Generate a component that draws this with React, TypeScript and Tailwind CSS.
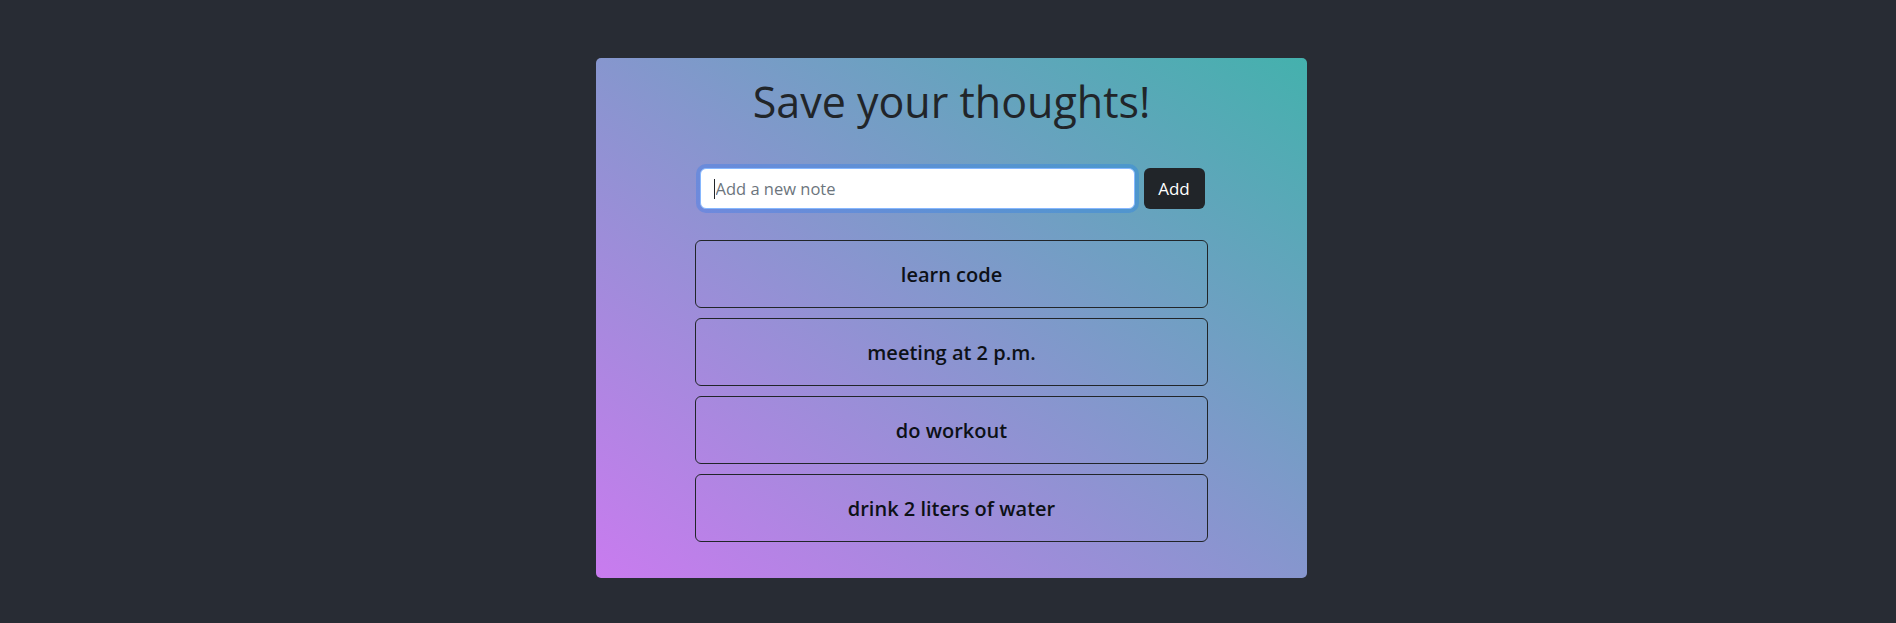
import React from "react";

const notes = ["learn code", "meeting at 2 p.m.", "do workout", "drink 2 liters of water"];

export default function App() {
  return (
    <div
      className="min-h-[623px] bg-[#282c34] pt-[58px] pl-[7px] flex justify-center items-start"
      style={{ fontFamily: '"Open Sans", "Noto Sans", sans-serif' }}
    >
      <div className="w-[711px] h-[520px] rounded-[5px] bg-[linear-gradient(to_top_right,#c97bef,#44b1ad)] flex flex-col items-center">
        <h1 className="mt-[17px] text-[43px] leading-[53px] font-medium text-[#212529]">
          Save your thoughts!
        </h1>
        <div className="mt-[40px] flex items-center gap-[9px] pl-[1px]">
          <div className="relative">
            <input
              type="text"
              placeholder="Add a new note"
              className="w-[435px] h-[41px] rounded-[6px] bg-white border border-[#86b7fe] shadow-[0_0_0_4px_rgba(13,110,253,0.25)] pl-[15px] pr-3 text-[16.5px] text-[#212529] placeholder:text-[#6c757d] outline-none"
            />
            <span className="absolute left-[14px] top-[11px] w-[1px] h-[20px] bg-[#212529]" />
          </div>
          <button className="w-[61px] h-[41px] rounded-[6px] bg-[#212529] text-white text-[17px] leading-none">
            Add
          </button>
        </div>
        <div className="mt-[31px] w-[513px] flex flex-col gap-[10px]">
          {notes.map((n) => (
            <div
              key={n}
              className="h-[68px] pt-[2px] rounded-[6px] border border-[#212529] flex items-center justify-center text-[20px] leading-[1.2] font-semibold text-[#0d1117]"
            >
              {n}
            </div>
          ))}
        </div>
      </div>
    </div>
  );
}
